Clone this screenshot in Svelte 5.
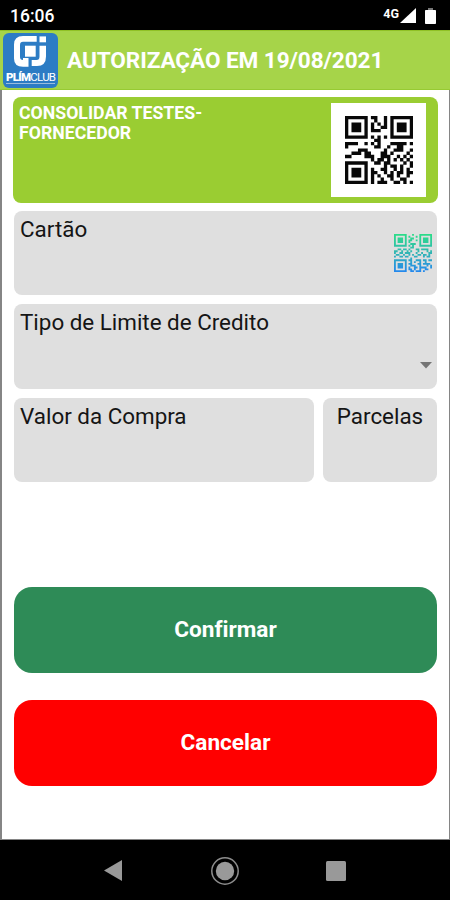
<script>
  const finder = (r, c, x, y) => {
    const i = r - y, j = c - x;
    if (i < 0 || j < 0 || i > 6 || j > 6) return false;
    return i === 0 || j === 0 || i === 6 || j === 6 || (i > 1 && i < 5 && j > 1 && j < 5);
  };
  const build = (rows) => {
    let d = '';
    rows.forEach((row, r) => {
      for (let c = 0; c < 21; c++) {
        if (row[c] === '#' || finder(r, c, 0, 0) || finder(r, c, 14, 0) || finder(r, c, 0, 14)) {
          d += `M${c} ${r}h1.02v1.02h-1.02z`;
        }
      }
    });
    return d;
  };
  const supplierCode = build([
    '........##..#........',
    '.........#..#........',
    '........#.#.#........',
    '........#..##........',
    '........###..........',
    '.....................',
    '........#.#.#........',
    '.........##..........',
    '####..#.#.#...#####.#',
    '#........##..#..##...',
    '....###.....#..###..#',
    '..###.##...##.#....#.',
    '##....###..###..#.#.#',
    '........#.##.#.#.#.#.',
    '.........##.##....#.#',
    '............#.##.#..#',
    '........#..##..#.#.#.',
    '........##..#.#.##.##',
    '........#.#..##.#..#.',
    '........#..#..#..##..',
    '........#.###..##.#.#'
  ]);
  const scanCode = build([
    '..........#..........',
    '........#...#........',
    '.........##..........',
    '........##..#........',
    '........#............',
    '.........###.........',
    '........#.#..........',
    '.........##..........',
    '..##.##.#...##.####..',
    '##..#..#.#...#....#.#',
    '#..##.###...#..#...##',
    '.##..#..#.#..##.##.#.',
    '#..##.##...##...#.##.',
    '.........#...........',
    '........##..###.##.##',
    '.........#.#..#..#...',
    '........##...##.####.',
    '.........###..#...#.#',
    '........#..##.####..#',
    '........##.#..#..##..',
    '.........##.###.#....'
  ]);
</script>

<div class="phone">
  <div class="status">
    <span class="clock">16:06</span>
    <div class="signals">
      <span class="net">4G</span>
      <svg width="16" height="15" viewBox="0 0 16 15"><path d="M0 15 L16 0V15z" fill="#fff" /></svg>
      <svg class="battery" width="11" height="16" viewBox="0 0 11 16"><path d="M3 0h5v2h2.2q.8 0 .8.8v12.4q0 .8-.8.8H.8q-.8 0-.8-.8V2.8Q0 2 .8 2H3z" fill="#fff" /><path d="M3 0h5v2H3z" fill="#777" /></svg>
    </div>
  </div>

  <header>
    <div class="logo">
      <svg width="33" height="31" viewBox="0 0 33 31" fill="#fff">
        <path d="M22.7 0V5.7H9Q6 5.7 6 9V21Q6 24 9 24V22H14.5V30.7H9Q0 30.7 0 22.5V8.5Q0 0 9 0z" />
        <path d="M11 9.7H21.7V20.7H11z" />
        <path d="M25.5 .4H32V6.3H25.5z" />
        <path d="M25.5 9.7H32V20.5Q32 30 23 30H17.7V24H22.5Q25.5 24 25.5 20.5z" />
      </svg>
      <span class="brand"><b>PLÍM</b><i>CLUB</i></span>
    </div>
    <h1>AUTORIZAÇÃO EM 19/08/2021</h1>
  </header>

  <main>
    <section class="supplier">
      <h2>CONSOLIDAR TESTES-<br />FORNECEDOR</h2>
      <div class="code"><svg width="68" height="68" viewBox="0 0 21 21"><path d={supplierCode} fill="#080808" /></svg></div>
    </section>

    <section class="field card-field">
      <span class="lbl">Cartão</span>
      <svg width="38" height="38" viewBox="0 0 21 21">
        <defs><linearGradient id="scan" gradientUnits="userSpaceOnUse" x1="0" y1="0" x2="0" y2="21"><stop offset="0" stop-color="#2bdd88" /><stop offset=".5" stop-color="#32b5b4" /><stop offset="1" stop-color="#2488ee" /></linearGradient></defs>
        <path d={scanCode} fill="url(#scan)" />
      </svg>
    </section>

    <section class="field limit">
      <span class="lbl">Tipo de Limite de Credito</span>
      <svg width="12" height="7" viewBox="0 0 12 7"><path d="M0 0H12L6 6.5z" fill="#757575" /></svg>
    </section>

    <div class="row">
      <section class="field value"><span class="lbl">Valor da Compra</span></section>
      <section class="field parts"><span class="lbl">Parcelas</span></section>
    </div>

    <button class="confirm">Confirmar</button>
    <button class="cancel">Cancelar</button>
  </main>

  <nav>
    <svg width="18" height="21" viewBox="0 0 18 21"><path d="M18 0V21L0 10.5z" fill="#999" /></svg>
    <svg class="home" width="28" height="28" viewBox="0 0 28 28"><circle cx="14" cy="14" r="13.2" fill="none" stroke="#8c8c8c" stroke-width="1.5" /><circle cx="14" cy="14" r="9.2" fill="#999" /></svg>
    <svg width="20" height="20" viewBox="0 0 20 20"><rect width="20" height="20" rx="1.5" fill="#999" /></svg>
  </nav>
</div>

<style>
  .phone { width: 450px; height: 900px; display: flex; flex-direction: column; background: #000; font-family: Roboto, "Liberation Sans", sans-serif; font-variant-ligatures: none; overflow: hidden; }
  .phone * { box-sizing: border-box; }
  svg { display: block; flex: none; }
  .status { height: 30px; flex: none; display: flex; justify-content: space-between; padding: 0 14px 0 10px; color: #fff; }
  .clock { font-size: 17.5px; line-height: 33px; font-weight: 500; }
  .signals { display: flex; align-items: flex-start; padding-top: 8px; }
  .net { font-size: 12.5px; line-height: 12px; font-weight: 700; margin: 0 1px 0 0; }
  .battery { margin-left: 9px; }
  header { height: 60px; flex: none; display: flex; align-items: center; background: #a6d449; border-top: 1px solid #90c126; border-bottom: 1px solid #97ca33; padding-left: 3px; }
  .logo { width: 55px; height: 55px; border-radius: 6px; background: #2c7cc4; display: flex; flex-direction: column; align-items: center; padding: 3px 0 0 0; flex: none; }
  .brand { display: block; width: 49px; border-bottom: 1px solid #9bbddd; margin-top: 4px; font-size: 11.5px; line-height: 12px; letter-spacing: -.75px; color: #fff; white-space: nowrap; }
  .brand b { font-weight: 900; }
  .brand i { font-style: normal; font-weight: 400; }
  h1 { margin: 2px 0 0 9px; font-size: 22.6px; line-height: 28px; letter-spacing: -.09px; font-weight: 700; color: #fff; white-space: nowrap; }
  main { flex: 1; display: flex; flex-direction: column; background: #fff; border: solid #858585; border-width: 0 1px 1px 2px; padding: 7px 12px 0 12px; }
  .supplier { height: 106px; flex: none; display: flex; justify-content: space-between; margin: 0 -1px; border-radius: 8px; background: #9acd32; padding: 6px 12px 0 6px; }
  h2 { margin: 0; font-size: 17.7px; line-height: 20px; font-weight: 700; color: #fff; white-space: nowrap; }
  .code { width: 95px; height: 94px; background: #fff; display: flex; align-items: center; justify-content: center; }
  .field { height: 84.5px; flex: none; border-radius: 8px; background: #dfdfdf; padding: 4px 5px 0 6px; color: #151515; font-size: 22.4px; line-height: 28px; white-space: nowrap; }
  .card-field { margin-top: 7.5px; display: flex; justify-content: space-between; }
  .card-field svg { margin-top: 19px; }
  .limit { margin-top: 9px; display: flex; justify-content: space-between; }
  .limit svg { margin-top: 54px; }
  .row { display: flex; gap: 9px; margin-top: 9px; }
  .value { width: 300px; }
  .parts { flex: 1; text-align: center; padding: 4px 0 0; }
  button { border: 0; padding: 0; height: 86px; flex: none; border-radius: 18px; font: 700 22.6px/28px Roboto, "Liberation Sans", sans-serif; font-variant-ligatures: none; color: #fff; }
  .confirm { margin-top: 105px; background: #2e8b57; }
  .cancel { margin-top: 26.5px; background: #f00; }
  nav { height: 60px; flex: none; display: flex; align-items: center; justify-content: space-between; padding: 1px 104px 0 104px; }
  .home { margin: 0 -1px 0 1px; }
</style>
